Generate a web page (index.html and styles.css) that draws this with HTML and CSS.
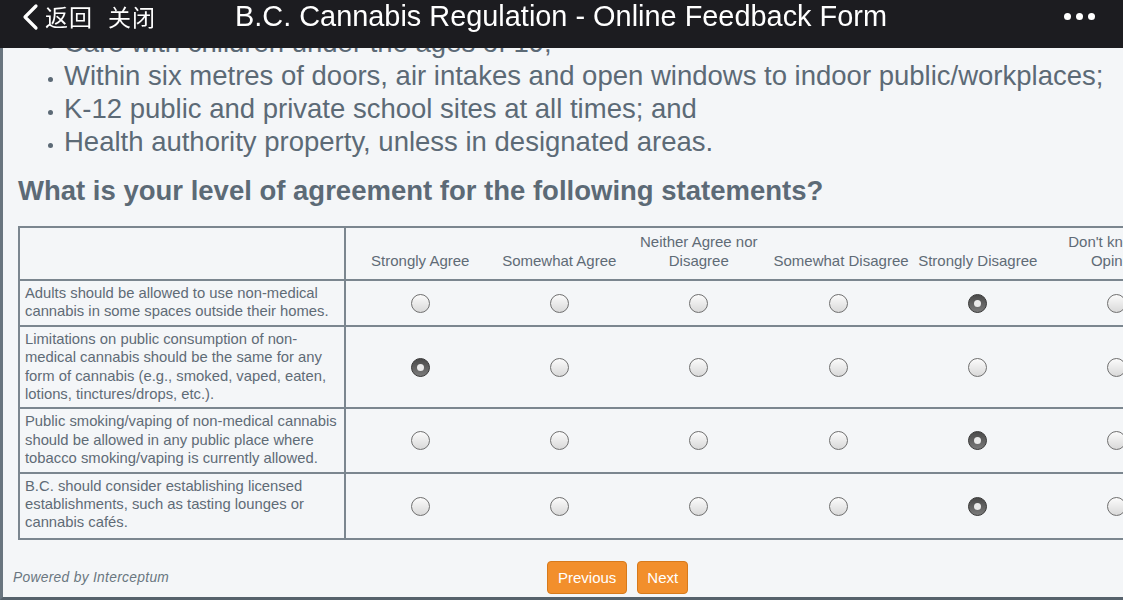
FILE: index.html
```html
<!DOCTYPE html>
<html lang="en">
<head>
<meta charset="utf-8">
<title>B.C. Cannabis Regulation - Online Feedback Form</title>
<link rel="stylesheet" href="styles.css">
</head>
<body>
<header class="topbar">
  <div class="nav-left">
    <svg class="chev" width="20" height="28" viewBox="0 0 20 28"><path d="M15 3 L4 14 L15 25" fill="none" stroke="#fff" stroke-width="3.2" stroke-linecap="round" stroke-linejoin="round"/></svg>
    <span class="back">返回</span>
    <span class="close">关闭</span>
  </div>
  <div class="title">B.C. Cannabis Regulation - Online Feedback Form</div>
  <div class="more"><span class="dot"></span><span class="dot"></span><span class="dot"></span></div>
</header>
<main class="panel">
  <ul class="bullets">
    <li>Care with children under the ages of 19;</li>
    <li>Within six metres of doors, air intakes and open windows to indoor public/workplaces;</li>
    <li>K-12 public and private school sites at all times; and</li>
    <li>Health authority property, unless in designated areas.</li>
  </ul>
  <h2 class="question">What is your level of agreement for the following statements?</h2>
  <table class="matrix">
    <colgroup>
      <col class="c-stmt"><col class="c-opt"><col class="c-opt"><col class="c-opt"><col class="c-opt"><col class="c-opt"><col class="c-opt">
    </colgroup>
    <thead>
      <tr>
        <th class="stmt"></th>
        <th>Strongly Agree</th>
        <th>Somewhat Agree</th>
        <th>Neither Agree nor<br>Disagree</th>
        <th>Somewhat Disagree</th>
        <th>Strongly Disagree</th>
        <th>Don't know/No<br>Opinion</th>
      </tr>
    </thead>
    <tbody>
      <tr>
        <td class="stmt">Adults should be allowed to use non-medical cannabis in some spaces outside their homes.</td>
        <td><span class="radio"></span></td><td><span class="radio"></span></td><td><span class="radio"></span></td><td><span class="radio"></span></td><td><span class="radio on"></span></td><td><span class="radio"></span></td>
      </tr>
      <tr>
        <td class="stmt">Limitations on public consumption of non-medical cannabis should be the same for any form of cannabis (e.g., smoked, vaped, eaten, lotions, tinctures/drops, etc.).</td>
        <td><span class="radio on"></span></td><td><span class="radio"></span></td><td><span class="radio"></span></td><td><span class="radio"></span></td><td><span class="radio"></span></td><td><span class="radio"></span></td>
      </tr>
      <tr>
        <td class="stmt">Public smoking/vaping of non-medical cannabis should be allowed in any public place where tobacco smoking/vaping is currently allowed.</td>
        <td><span class="radio"></span></td><td><span class="radio"></span></td><td><span class="radio"></span></td><td><span class="radio"></span></td><td><span class="radio on"></span></td><td><span class="radio"></span></td>
      </tr>
      <tr class="last">
        <td class="stmt">B.C. should consider establishing licensed establishments, such as tasting lounges or cannabis cafés.</td>
        <td><span class="radio"></span></td><td><span class="radio"></span></td><td><span class="radio"></span></td><td><span class="radio"></span></td><td><span class="radio on"></span></td><td><span class="radio"></span></td>
      </tr>
    </tbody>
  </table>
  <footer class="form-foot">
    <span class="powered">Powered by Interceptum</span>
    <div class="btns">
      <button class="btn">Previous</button>
      <button class="btn">Next</button>
    </div>
  </footer>
</main>
</body>
</html>
```
FILE: styles.css
```css
html, body {
  margin: 0;
  padding: 0;
  overflow: hidden;
  background: #f4f6f8;
  font-family: "Liberation Sans", Arial, sans-serif;
}
.topbar {
  position: fixed;
  top: 0;
  left: 0;
  right: 0;
  height: 48px;
  background: #1c1c20;
  color: #fff;
  z-index: 10;
  display: flex;
  align-items: flex-start;
}
.nav-left {
  display: flex;
  align-items: center;
  height: 32px;
  padding-left: 21px;
  font-family: "Noto Sans CJK SC", "Liberation Sans", sans-serif;
  font-size: 23px;
}
.chev { margin-right: 4px; margin-top: 1px; }
.back { letter-spacing: 1px; }
.close { margin-left: 15px; letter-spacing: 1px; }
.title {
  margin-left: 79px;
  height: 32px;
  line-height: 32px;
  font-size: 28.9px;
}
.more {
  margin-left: auto;
  margin-right: 28px;
  height: 32px;
  display: flex;
  align-items: center;
  gap: 5px;
}
.dot {
  width: 7px;
  height: 7px;
  border-radius: 50%;
  background: #fff;
}
.panel {
  box-sizing: border-box;
  height: 600px;
  width: 1300px;
  border-left: 3px solid #69757f;
  border-bottom: 3px solid #56626c;
  padding-top: 26px;
  color: #5c6a76;
}
.bullets {
  list-style: none;
  margin: 0;
  padding: 0 0 0 61px;
  font-size: 27.5px;
  line-height: 33px;
}
.bullets li { position: relative; }
.bullets li::before {
  content: "";
  position: absolute;
  left: -16px;
  top: 18px;
  width: 5px;
  height: 5px;
  border-radius: 50%;
  background: #5c6a76;
}
.question {
  margin: 16px 0 0 15px;
  font-size: 27.5px;
  line-height: 33px;
  font-weight: bold;
}
.matrix {
  margin: 19px 0 0 15px;
  border-collapse: collapse;
  table-layout: fixed;
  width: 1163px;
  font-size: 15px;
  line-height: 18.4px;
  color: #5f6b76;
  border: 2px solid #7b868f;
}
.c-stmt { width: 326px; }
.c-opt { width: 139.5px; }
.matrix th, .matrix td {
  border-top: 2px solid #7b868f;
  border-bottom: 2px solid #7b868f;
  padding: 4px 0 4px 10px;
  text-align: center;
  vertical-align: middle;
}
.matrix th {
  font-weight: normal;
  vertical-align: bottom;
  white-space: nowrap;
  padding-bottom: 9px;
  height: 38px;
}
.matrix td.stmt, .matrix th.stmt {
  text-align: left;
  padding: 3px 2px 4px 5px;
  border-right: 2px solid #7b868f;
  font-size: 14.8px;
}
.matrix tr.last td.stmt { padding-bottom: 6px; }
.radio {
  display: inline-block;
  box-sizing: border-box;
  width: 19px;
  height: 19px;
  border-radius: 50%;
  border: 1px solid #707070;
  background: linear-gradient(#fbfbfb, #d9d9d9);
  vertical-align: middle;
  position: relative;
}
.radio.on {
  border-color: #3a3a3a;
  background: linear-gradient(#4a4a4a, #7a7a7a);
}
.radio.on::after {
  content: "";
  position: absolute;
  left: 5px;
  top: 5px;
  width: 7px;
  height: 7px;
  border-radius: 50%;
  background: #eaeaea;
}
.form-foot {
  display: flex;
  align-items: center;
  margin-top: 21px;
  padding-left: 10px;
}
.powered {
  width: 534px;
  font-style: italic;
  font-size: 13.8px;
  color: #6a7680;
  letter-spacing: 0.3px;
  margin-top: 1px;
}
.btns { display: flex; gap: 10px; }
.btn {
  height: 33px;
  padding: 0 10px;
  border: 1px solid #d77a1c;
  border-radius: 4px;
  background: #f28f2c;
  color: #fff;
  font-family: "Liberation Sans", Arial, sans-serif;
  font-size: 15px;
}
.btn + .btn { padding: 0 9px; }
```
